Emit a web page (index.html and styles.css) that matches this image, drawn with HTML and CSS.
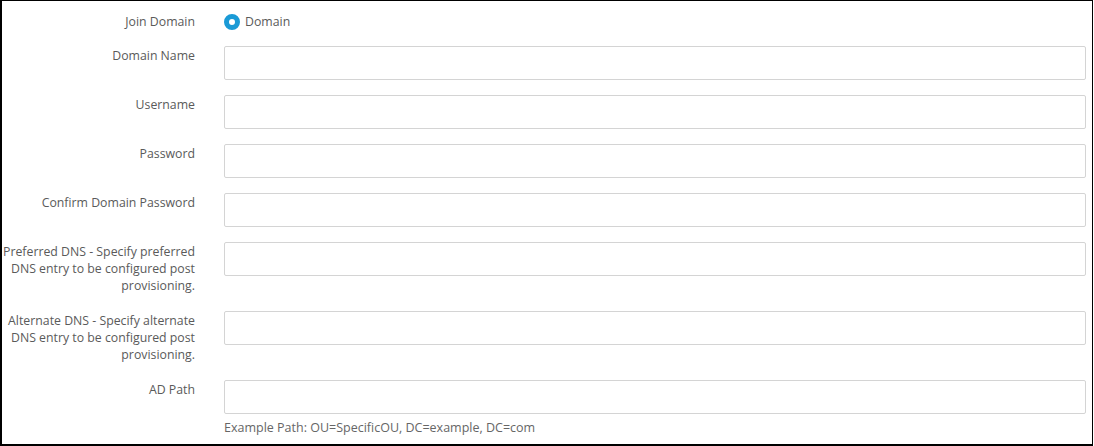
FILE: index.html
```html
<!DOCTYPE html>
<html lang="en">
<head>
    <meta charset="UTF-8">
    <title>Join Domain</title>
    <link rel="stylesheet" href="styles.css">
</head>
<body>
    <div class="frame">
        <form class="domain-form">
            <div class="form-row radio-row">
                <label class="row-label">Join Domain</label>
                <div class="row-field">
                    <label class="radio-option">
                        <span class="radio-dot"></span>
                        Domain
                    </label>
                </div>
            </div>
            <div class="form-row">
                <label class="row-label">Domain Name</label>
                <div class="row-field"><input type="text" class="text-input"></div>
            </div>
            <div class="form-row">
                <label class="row-label">Username</label>
                <div class="row-field"><input type="text" class="text-input"></div>
            </div>
            <div class="form-row">
                <label class="row-label">Password</label>
                <div class="row-field"><input type="password" class="text-input"></div>
            </div>
            <div class="form-row">
                <label class="row-label">Confirm Domain Password</label>
                <div class="row-field"><input type="password" class="text-input"></div>
            </div>
            <div class="form-row">
                <label class="row-label">Preferred DNS - Specify preferred DNS entry to be configured post provisioning.</label>
                <div class="row-field"><input type="text" class="text-input"></div>
            </div>
            <div class="form-row">
                <label class="row-label">Alternate DNS - Specify alternate DNS entry to be configured post provisioning.</label>
                <div class="row-field"><input type="text" class="text-input"></div>
            </div>
            <div class="form-row">
                <label class="row-label">AD Path</label>
                <div class="row-field">
                    <input type="text" class="text-input">
                    <p class="help-text">Example Path: OU=SpecificOU, DC=example, DC=com</p>
                </div>
            </div>
        </form>
    </div>
</body>
</html>
```
FILE: styles.css
```css
body {
    margin: 0;
    font-family: "Open Sans", Arial, sans-serif;
    font-size: 12.3px;
    line-height: 17px;
    color: #5a5a5a;
}

.frame {
    box-sizing: border-box;
    width: 1093px;
    height: 446px;
    border: 1px solid #000;
    border-left-width: 2px;
    border-bottom-width: 2px;
    background: #fff;
    padding: 12px 6px 0 0;
}

.form-row {
    display: grid;
    grid-template-columns: 193px 1fr;
    column-gap: 29px;
    margin-bottom: 15px;
}

.radio-row {
    margin-bottom: 16px;
}

.row-label {
    text-align: right;
    padding: 1px 0 2px;
}

.radio-row .row-label {
    padding: 0;
}

.radio-option {
    display: flex;
    align-items: center;
    gap: 5px;
}

.radio-dot {
    box-sizing: border-box;
    width: 16px;
    height: 16px;
    border-radius: 50%;
    border: 5px solid #1a9ad6;
    background: #fff;
}

.text-input {
    box-sizing: border-box;
    display: block;
    width: 100%;
    height: 34px;
    border: 1px solid #d4d4d4;
    border-radius: 2px;
    padding: 6px 10px;
    font: inherit;
    background: #fff;
}

.help-text {
    margin: 5px 0 0;
    font-size: 12.5px;
    color: #666;
}
```
